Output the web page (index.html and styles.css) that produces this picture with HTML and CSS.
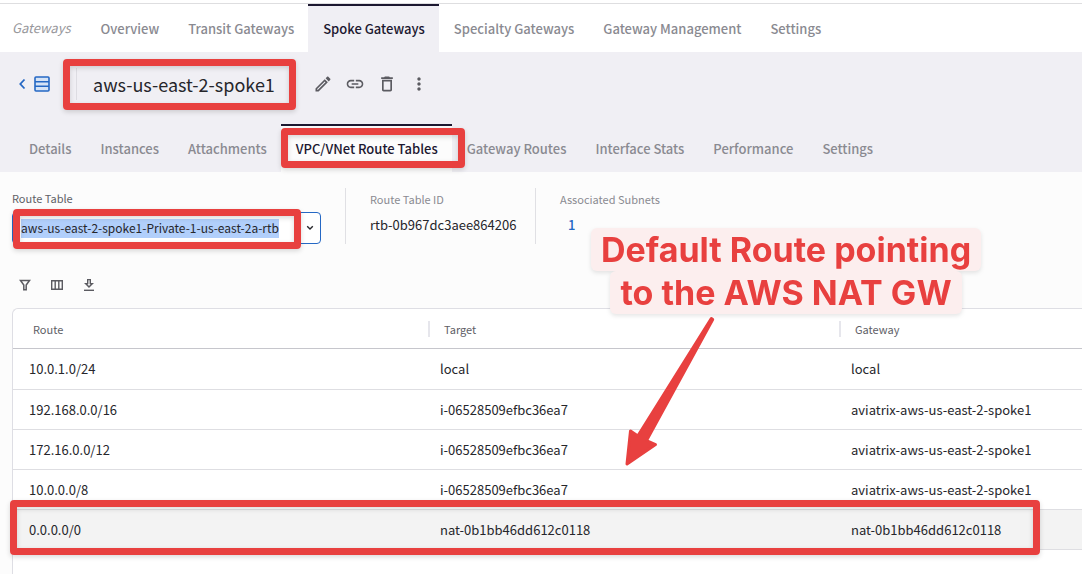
FILE: index.html
```
<!DOCTYPE html>
<html lang="en">
<head>
<meta charset="utf-8">
<title>Spoke Gateways</title>
<link rel="stylesheet" href="styles.css">
</head>
<body>
<nav class="tabs tabs-main" aria-label="Gateways">
  <span class="tabs-title">Gateways</span>
  <a class="tab" href="#overview">Overview</a>
  <a class="tab" href="#transit">Transit Gateways</a>
  <a class="tab active" href="#spoke">Spoke Gateways</a>
  <a class="tab" href="#specialty">Specialty Gateways</a>
  <a class="tab" href="#management">Gateway Management</a>
  <a class="tab" href="#settings">Settings</a>
</nav>
<header class="head">
  <div class="title-row">
    <button class="back" aria-label="Back to list">
      <svg width="8" height="12" viewBox="0 0 8 12"><path d="M6.500 1.500 2.300 6l4.200 4.500" fill="none" stroke="currentColor" stroke-width="1.800"/></svg>
      <svg width="16" height="16" viewBox="0 0 16 16" fill="none" stroke="currentColor" stroke-width="1.600"><rect x="1" y="1" width="14" height="14" rx="1" fill="#d5e3f6"/><path d="M1 5.700h14M1 10.300h14"/></svg>
    </button>
    <h1 class="title">aws-us-east-2-spoke1</h1>
    <button class="icon" aria-label="Edit"><svg width="20" height="20" viewBox="0 0 24 24"><path d="M14.060 9.020l.92.920L5.920 19H5v-.920l9.060-9.060M17.660 3c-.250 0-.510.100-.700.290l-1.830 1.830 3.750 3.750 1.830-1.830c.390-.390.390-1.020 0-1.410l-2.340-2.340c-.200-.200-.450-.290-.710-.290zm-3.600 3.190L3 17.250V21h3.750L17.810 9.940l-3.750-3.750z"/></svg></button>
    <button class="icon" aria-label="Copy link"><svg width="20" height="20" viewBox="0 0 24 24"><path d="M3.900 12c0-1.710 1.390-3.100 3.100-3.100h4V7H7c-2.760 0-5 2.240-5 5s2.240 5 5 5h4v-1.900H7c-1.710 0-3.100-1.390-3.100-3.100zM8 13h8v-2H8v2zm9-6h-4v1.900h4c1.710 0 3.100 1.390 3.100 3.100s-1.390 3.100-3.100 3.100h-4V17h4c2.760 0 5-2.240 5-5s-2.240-5-5-5z"/></svg></button>
    <button class="icon" aria-label="Delete"><svg width="20" height="20" viewBox="0 0 24 24"><path d="M6 19c0 1.100.900 2 2 2h8c1.100 0 2-.900 2-2V7H6v12zM8 9h8v10H8V9zm7.500-5l-1-1h-5l-1 1H5v2h14V4h-3.500z"/></svg></button>
    <button class="icon" aria-label="More"><svg width="20" height="20" viewBox="0 0 24 24"><path d="M12 8c1.100 0 2-.900 2-2s-.900-2-2-2-2 .900-2 2 .900 2 2 2zm0 2c-1.100 0-2 .900-2 2s.900 2 2 2 2-.900 2-2-.900-2-2-2zm0 6c-1.100 0-2 .900-2 2s.900 2 2 2 2-.900 2-2-.900-2-2-2z"/></svg></button>
  </div>
  <nav class="tabs tabs-sub" aria-label="Gateway details">
    <a class="tab" href="#details">Details</a>
    <a class="tab" href="#instances">Instances</a>
    <a class="tab" href="#attachments">Attachments</a>
    <a class="tab active" href="#route-tables">VPC/VNet Route Tables</a>
    <a class="tab" href="#gateway-routes">Gateway Routes</a>
    <a class="tab" href="#interface-stats">Interface Stats</a>
    <a class="tab" href="#performance">Performance</a>
    <a class="tab" href="#sub-settings">Settings</a>
  </nav>
</header>
<main class="content">
  <section class="summary">
    <div class="picker">
      <label class="picker-label" for="route-table">Route Table</label>
      <div class="combo">
        <input class="combo-input" id="route-table" type="text" value="aws-us-east-2-spoke1-Private-1-us-east-2a-rtb">
        <button class="combo-toggle" aria-label="Show route tables"><svg width="8" height="6" viewBox="0 0 8 6"><path d="M1.200 1.200 4 4l2.800-2.800" fill="none" stroke="currentColor" stroke-width="1.400"/></svg></button>
      </div>
    </div>
    <dl class="fact">
      <dt>Route Table ID</dt>
      <dd>rtb-0b967dc3aee864206</dd>
    </dl>
    <dl class="fact">
      <dt>Associated Subnets</dt>
      <dd><a class="count" href="#subnets">1</a></dd>
    </dl>
  </section>
  <div class="toolbar">
    <button class="icon" aria-label="Filter"><svg width="16" height="16" viewBox="0 0 16 16"><path d="M3.500 3.500h9L9.200 8v4.800H6.800V8z" fill="none" stroke="currentColor" stroke-width="1.500"/></svg></button>
    <button class="icon" aria-label="Columns"><svg width="16" height="16" viewBox="0 0 16 16"><path d="M2.700 3.700h10.600v8.600H2.700zM6.200 3.700v8.600M9.800 3.700v8.600" fill="none" stroke="currentColor" stroke-width="1.400"/></svg></button>
    <button class="icon" aria-label="Download"><svg width="16" height="16" viewBox="0 0 16 16"><path d="M6.700 2.600h2.600v4h2L8 9.900 4.700 6.600h2z" fill="none" stroke="currentColor" stroke-width="1.400"/><path d="M3 12.600h10v1.400H3z"/></svg></button>
  </div>
  <div class="panel">
    <table class="routes">
      <thead><tr><th>Route</th><th>Target</th><th>Gateway</th></tr></thead>
      <tbody>
        <tr><td>10.0.1.0/24</td><td>local</td><td>local</td></tr>
        <tr><td>192.168.0.0/16</td><td>i-06528509efbc36ea7</td><td>aviatrix-aws-us-east-2-spoke1</td></tr>
        <tr><td>172.16.0.0/12</td><td>i-06528509efbc36ea7</td><td>aviatrix-aws-us-east-2-spoke1</td></tr>
        <tr><td>10.0.0.0/8</td><td>i-06528509efbc36ea7</td><td>aviatrix-aws-us-east-2-spoke1</td></tr>
        <tr class="hovered"><td>0.0.0.0/0</td><td>nat-0b1bb46dd612c0118</td><td>nat-0b1bb46dd612c0118</td></tr>
      </tbody>
    </table>
  </div>
</main>
<div class="mark mark-title"></div>
<div class="mark mark-tab"></div>
<div class="mark mark-picker"></div>
<div class="mark mark-row"></div>
<svg class="arrow" width="100" height="160" viewBox="0 0 100 160"><path d="M91.300 8.500 17.800 126 10.500 121 7 154 35.500 134.500 26.500 130.500 92.700 9.500z" fill="#e8403f" stroke="#e8403f" stroke-width="3" stroke-linejoin="round"/></svg>
<p class="note"><span>Default Route pointing</span><span>to the AWS NAT GW</span></p>
</body>
</html>
```
FILE: styles.css
```
* { box-sizing: border-box; }

body {
  position: relative;
  display: flex;
  flex-direction: column;
  min-height: 100vh;
  margin: 0;
  padding-top: 3px;
  overflow: hidden;
  background: #fff;
  color: #26262b;
  font: 13px/20px "Noto Sans CJK SC", "Open Sans", sans-serif;
}

button {
  display: flex;
  align-items: center;
  justify-content: center;
  padding: 0;
  border: 0;
  background: none;
  color: #5b5b61;
}

svg { fill: currentColor; }

.tabs { display: flex; padding-left: 12px; white-space: nowrap; }
.tabs-main { border-top: 1px solid #dedee0; }

.tabs-title {
  padding: 14px 15px 14px 0;
  color: #98989c;
  font-style: italic;
}

.tab {
  padding: 13px 14px 13px 15px;
  border-top: 2px solid transparent;
  color: #8a8a91;
  font-weight: 500;
  text-decoration: none;
}

.tab.active { border-color: #1c1830; background: #f0eff4; color: #1c1830; }

.head { background: #f0eff4; }

.title-row { display: flex; align-items: center; height: 64px; padding-left: 18px; }
.back { gap: 8px; color: #2568c4; }

.title {
  margin: 0 32px 0 26px;
  padding-left: 16px;
  border-left: 1px solid #dddce2;
  font-size: 18px;
  font-weight: 400;
  line-height: 32px;
}

.title-row .icon { width: 32px; height: 32px; }
.tabs-sub { padding-top: 8px; padding-left: 14px; }
.tabs-sub .active { background: #fcfcfc; }

.content {
  display: flex;
  flex: 1;
  flex-direction: column;
  padding: 16px 0 0 12px;
  background: #fcfcfc;
}

.summary { display: flex; height: 56px; }
.picker { width: 309px; margin-right: 24px; }
.picker-label { display: block; margin-bottom: 4px; color: #606066; font-size: 11px; }

.combo {
  display: flex;
  align-items: center;
  justify-content: space-between;
  height: 32px;
  padding: 0 6px 0 8px;
  border: 1px solid #2568c4;
  border-radius: 4px;
  background: #fff;
}

.combo-input {
  field-sizing: content;
  height: 19px;
  padding: 0;
  border: 0;
  outline: 0;
  background: #b1cffb;
  color: inherit;
  font: inherit;
  font-size: 12px;
}

.combo-toggle { width: 8px; height: 20px; color: #26262b; }

.fact { width: 190px; margin: 0; padding-left: 24px; border-left: 1px solid #e0e0e4; }
.fact dt { padding-top: 1px; margin-bottom: 6px; color: #8a8a91; font-size: 11px; }
.fact dd { margin: 0; }
.count { padding-left: 8px; color: #2568c4; font-weight: 500; text-decoration: none; }

.toolbar { display: flex; gap: 16px; padding: 33px 0 15px 5px; }
.toolbar .icon { width: 16px; height: 16px; }

.panel {
  flex: 1;
  border: 1px solid #dedee4;
  border-width: 1px 0 0 1px;
  border-top-left-radius: 6px;
  background: #fff;
}

.routes { width: 100%; table-layout: fixed; border-collapse: separate; border-spacing: 0; }

.routes th {
  position: relative;
  width: 411px;
  height: 40px;
  padding: 0 0 0 20px;
  border-bottom: 1px solid #c6c6cc;
  color: #606066;
  font-size: 11px;
  font-weight: 400;
  text-align: left;
}

.routes th:last-child { width: auto; }

.routes th + th::before {
  position: absolute;
  top: 12px;
  left: 4px;
  width: 2px;
  height: 16px;
  background: #e6e6ec;
  content: "";
}

.routes td { height: 40px; padding: 0 16px; border-bottom: 1px solid #dedee2; }
.routes tbody tr:first-child td { height: 41px; }
.routes .hovered td { background: #f3f3f3; }

/* Annotations drawn over the page */
.mark {
  position: absolute;
  border: 7px solid #e8403f;
  border-radius: 4px;
  box-shadow: 0 2px 5px rgba(0, 0, 0, .15), inset 0 2px 5px rgba(0, 0, 0, .15);
  pointer-events: none;
}

.mark-title { top: 59px; left: 63px; width: 233px; height: 51px; }
.mark-tab { top: 128px; left: 281px; width: 184px; height: 40px; }
.mark-picker { top: 209px; left: 13px; width: 288px; height: 40px; }
.mark-row { top: 500px; left: 10px; width: 1030px; height: 55px; }
.arrow { position: absolute; top: 310px; left: 620px; pointer-events: none; }

.note {
  position: absolute;
  top: 228px;
  left: 591px;
  display: flex;
  flex-direction: column;
  align-items: center;
  margin: 0;
  color: #e8403f;
  font: 700 34px/43px Inter, sans-serif;
  white-space: nowrap;
  filter: drop-shadow(0 2px 2px rgba(0, 0, 0, .1));
}

.note span { padding: 0 10px; border-radius: 6px; background: #fceeee; }
```
